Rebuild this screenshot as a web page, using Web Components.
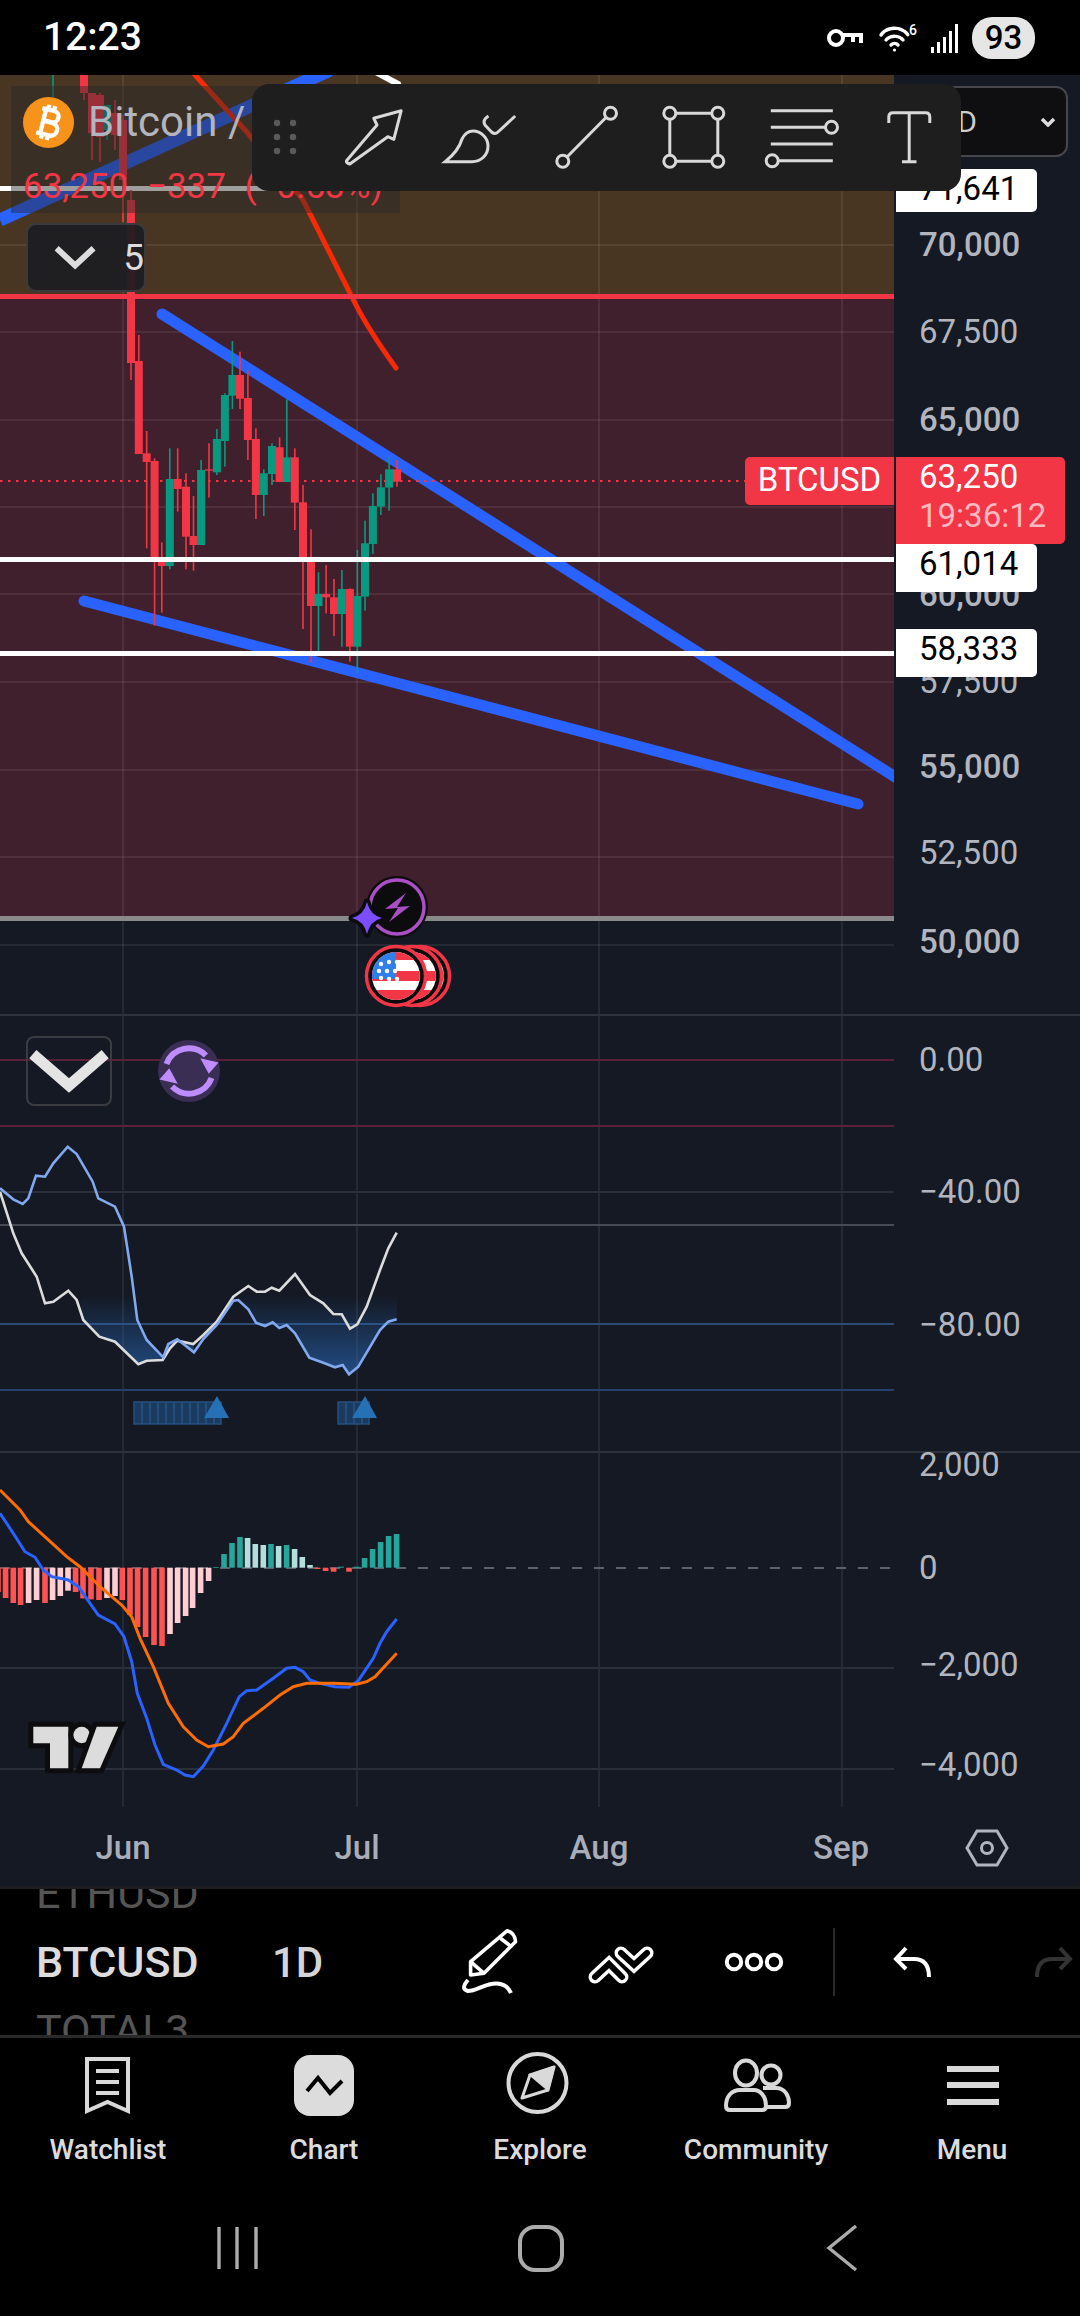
<!DOCTYPE html>
<html>
<head>
<meta charset="utf-8">
<title>BTCUSD</title>
<style>
  html, body { margin: 0; padding: 0; background: #000; }
  body { width: 1080px; height: 2316px; overflow: hidden; font-family: Roboto, "Liberation Sans", sans-serif; }
</style>
</head>
<body>
<tv-app></tv-app>
<script>
const RED = '#f23645', GREEN = '#089981', AXIS = '#b2b5be', BG = '#141924';

function tick(y, text, weight) {
  return `<span class="tick" style="top:${y}px;font-weight:${weight || 400}">${text}</span>`;
}
function grid(top, bottom) {
  return [123, 357, 599, 842].map(x => `<line x1="${x}" x2="${x}" y1="${top}" y2="${bottom}" stroke="#fff" stroke-opacity=".07" stroke-width="2"/>`).join('');
}
function hline(y, color, w) {
  return `<line x1="0" x2="894" y1="${y}" y2="${y}" stroke="${color}" stroke-width="${w || 2}"/>`;
}
function poly(points, ox, oy) {
  return points.map(p => (p[0] / 3 + (ox || 0)).toFixed(1) + ',' + (p[1] / 3 + oy).toFixed(1)).join(' ');
}

const paneStyle = `
  :host { display: flex; box-sizing: border-box; width: 1080px; background: ${BG}; }
  .plot { position: relative; width: 894px; height: 100%; flex: none; overflow: hidden; }
  .plot svg { display: block; width: 894px; height: 100%; }
  .axis { position: relative; flex: 1; height: 100%; }
  .tick { position: absolute; left: 25px; font-size: 33px; line-height: 40px; margin-top: -20px; color: ${AXIS}; white-space: nowrap; }
`;

// status bar
const statusTpl = document.createElement('template');
statusTpl.innerHTML = `
  <style>
    :host { display: flex; align-items: center; height: 75px; padding: 0 45px 0 43px; box-sizing: border-box; background: #000; color: #fff; }
    .time { font-size: 39px; font-weight: 500; flex: 1; padding-bottom: 2px; }
    .icons { display: flex; align-items: center; }
    svg { display: block; }
    .batt { width: 63px; height: 42px; border-radius: 20px; margin-left: 13px; background: #e6e6e6; color: #000; font-size: 33px; font-weight: 500; line-height: 42px; text-align: center; }
  </style>
  <div class="time">12:23</div>
  <div class="icons">
    <svg width="37" height="20" viewBox="0 0 37 20" fill="none" stroke="#fff" stroke-width="4" style="margin-right:15px">
      <circle cx="10" cy="10" r="7"/><path d="M17 7H35V15M27 7V14"/>
    </svg>
    <svg width="40" height="30" viewBox="0 0 40 30" fill="none" stroke="#fff" stroke-width="3.4" stroke-linecap="round" style="margin-right:13px">
      <path d="M3 12C9 3 24 3 30 12" stroke-dasharray="5 1.5"/><path d="M8 17C12 12 21 12 25 17" stroke-dasharray="4 1.5"/><path d="M13 22C15 20 18 20 20 22"/>
      <circle cx="16.5" cy="27" r="1.6" fill="#fff" stroke="none"/>
      <text x="31" y="12" font-family="Roboto" font-size="14" font-weight="500" fill="#fff" stroke="none">6</text>
    </svg>
    <svg width="28" height="30" viewBox="0 0 28 30" fill="#fff">
      <rect x="0" y="24" width="3" height="6"/><rect x="6" y="19" width="3" height="11"/><rect x="12" y="14" width="3" height="16"/><rect x="18" y="8" width="3" height="22"/><rect x="24" y="1" width="3" height="29"/>
    </svg>
    <div class="batt">93</div>
  </div>`;
class StatusBar extends HTMLElement {
  constructor() {
    super();
    this.attachShadow({ mode: 'open' }).appendChild(statusTpl.content.cloneNode(true));
  }
}
customElements.define('status-bar', StatusBar);

// main candle pane
function candles() {
  const early = [
    [53, 60, 60, 60, 97, 'G'], [84, 60, 60, 93, 100, 'R'], [92, 93, 93, 133, 160, 'R'], [100, 93, 95, 137, 162, 'R'],
    [107, 105, 105, 130, 140, 'G'], [115, 100, 113, 135, 150, 'R'], [123, 115, 120, 180, 222, 'R'], [131, 190, 200, 363, 380, 'R']
  ];
  // x, wick top, body top, body bottom, wick bottom, read from the 2.904x / 3x crop
  const rest = [
    [403,165,243,522,522,'R'],[426,453,520,546,805,'R'],[449,535,543,836,1037,'R'],[470,787,838,858,998,'R'],
    [493,505,597,858,868,'G'],[516,505,597,627,695,'R'],[540,580,620,770,868,'R'],[562,648,768,795,872,'R'],
    [584,540,570,795,795,'G'],[607,490,568,572,653,'R'],[630,447,477,577,585,'G'],[653,340,345,483,560,'G'],
    [675,183,285,347,387,'G'],[697,215,285,356,387,'R'],[720,272,354,480,540,'R'],[743,445,477,645,717,'R'],
    [766,568,580,645,708,'G'],[790,490,498,582,615,'G'],[812,472,502,606,606,'R'],[833,358,532,606,606,'G'],
    [856,505,532,668,750,'R'],[880,615,667,842,1047,'R'],[903,748,842,978,1148,'R'],[925,877,942,978,1128,'G'],
    [947,855,942,952,1000,'R'],[970,897,952,1002,1068,'R'],[993,870,927,1002,1100,'G'],[1016,925,927,1100,1145,'R'],
    [1038,810,948,1100,1180,'G'],[1060,722,790,950,992,'G'],[1083,640,678,792,822,'G'],[1106,583,622,680,705,'G'],
    [1130,530,568,623,692,'G'],[1153,540,568,605,620,'R']
  ].map(c => [c[0] / 2.904, 280 + c[1] / 3, 280 + c[2] / 3, 280 + c[3] / 3, 280 + c[4] / 3, c[5]]);
  return early.concat(rest).map(c => {
    const col = c[5] === 'G' ? GREEN : RED;
    return `<rect x="${(c[0] - .8).toFixed(1)}" y="${c[1].toFixed(1)}" width="1.6" height="${(c[4] - c[1]).toFixed(1)}" fill="${col}"/>` +
      `<rect x="${(c[0] - 4).toFixed(1)}" y="${c[2].toFixed(1)}" width="8" height="${(c[3] - c[2]).toFixed(1)}" fill="${col}"/>`;
  }).join('');
}

function flagCoin(cx, i) {
  const cy = 976;
  let stars = '';
  [[-15, -11], [-7, -13], [1, -13], [-17, -4], [-9, -4], [-1, -4], [-15, 3], [-7, 4], [1, 4]].forEach(s => {
    stars += `<circle cx="${cx + s[0]}" cy="${cy + s[1] - 1}" r="2.2" fill="#fff"/>`;
  });
  return `<clipPath id="flag${i}"><circle cx="${cx}" cy="${cy}" r="24"/></clipPath>
    <circle cx="${cx}" cy="${cy}" r="29.5" fill="#0b0b0e" stroke="${RED}" stroke-width="3.5"/>
    <g clip-path="url(#flag${i})">
      <rect x="${cx - 25}" y="${cy - 25}" width="50" height="50" fill="#fff"/>
      <rect x="${cx - 25}" y="${cy - 25}" width="50" height="9" fill="${RED}"/>
      <rect x="${cx - 25}" y="${cy - 5}" width="50" height="10" fill="${RED}"/>
      <rect x="${cx - 25}" y="${cy + 14}" width="50" height="11" fill="${RED}"/>
      <rect x="${cx - 25}" y="${cy - 25}" width="25" height="28" fill="#2f80ed"/>
      ${stars}
    </g>`;
}

const priceTpl = document.createElement('template');
priceTpl.innerHTML = `
  <style>${paneStyle}
    .legend { position: absolute; left: 11px; top: 11px; width: 389px; height: 127px; background: rgba(43,41,43,.45); }
    .coin { position: absolute; left: 12px; top: 11px; }
    .name { position: absolute; left: 77px; top: 11px; font-size: 42px; line-height: 50px; color: ${AXIS}; white-space: nowrap; }
    .quote { position: absolute; left: 12px; top: 80px; font-size: 35px; line-height: 42px; color: ${RED}; white-space: nowrap; word-spacing: 10px; }
    .fold { position: absolute; left: 26px; top: 148px; width: 120px; height: 69px; box-sizing: border-box; display: flex; align-items: center; gap: 27px; padding-left: 26px;
      background: rgba(28,28,34,.92); border: 2px solid #3a3a3e; border-radius: 10px; color: #ddd; font-size: 37px; }
    .tag { position: absolute; left: 2px; box-sizing: border-box; height: 48px; padding-left: 23px; background: #fff; color: #000; font-size: 33px; line-height: 40px; border-radius: 0 5px 5px 0; width: 141px; }
    .now { position: absolute; left: 2px; top: 382px; width: 169px; height: 87px; box-sizing: border-box; padding: 0 0 0 23px; background: ${RED}; color: #fff; font-size: 33px; line-height: 39px; border-radius: 0 5px 5px 0; }
    .now div + div { color: #ffb9c0; }
    .sym { position: absolute; left: 745px; top: 382px; width: 149px; height: 48px; background: ${RED}; color: #fff; font-size: 33px; line-height: 46px; text-align: center; border-radius: 5px 0 0 5px; }
    .cur { position: absolute; left: 24px; top: 11px; width: 150px; height: 71px; box-sizing: border-box; display: flex; align-items: center; justify-content: flex-end; gap: 63px; padding-right: 10px;
      background: #0f0f11; border: 2px solid #47474b; border-radius: 12px; color: #ccc; font-size: 30px; }
  </style>
  <div class="plot">
    <svg viewBox="0 75 894 939" preserveAspectRatio="none">
      <rect x="0" y="75" width="894" height="220" fill="#483622"/>
      <rect x="0" y="295" width="894" height="622" fill="#41202d"/>
      ${[245, 332, 420, 507, 594, 682, 770, 857, 945].map(y => hline(y, 'rgba(255,255,255,.07)')).join('')}
      ${grid(75, 1014)}
      <line x1="0" y1="220" x2="330" y2="70" stroke="#2962ff" stroke-width="13"/>
      <line x1="372" y1="70" x2="398" y2="84" stroke="#fff" stroke-width="6" stroke-linecap="round"/>
      <path d="M195 75L245 130 303 200 351 295Q365 325 396 368" fill="none" stroke="#f72a08" stroke-width="5" stroke-linecap="round"/>
      ${hline(188.5, '#fff', 5)}
      <line x1="162" y1="314" x2="900" y2="780" stroke="#2962ff" stroke-width="11" stroke-linecap="round"/>
      <line x1="84" y1="601" x2="858" y2="804" stroke="#2962ff" stroke-width="11" stroke-linecap="round"/>
      ${hline(481, RED).replace('x2="894"', 'x2="745" stroke-dasharray="2.5 5.5"')}
      ${candles()}
      ${hline(296.5, RED, 5)}
      ${hline(559.5, '#fff', 5)}
      ${hline(653.5, '#fff', 5)}
      ${hline(918.5, '#8a8a8a', 5)}
      <circle cx="397" cy="907" r="31" fill="#0c0c0f"/>
      <circle cx="397" cy="907" r="27" fill="none" stroke="#ab4fc6" stroke-width="3.5"/>
      <path d="M9 -14L-12 2 1 1 -8 15 13 -1 0 0Z" transform="translate(397 907)" fill="#ab4fc6"/>
      <path d="M367 902Q370 915 382 918 370 921 367 934 364 921 352 918 364 915 367 902Z" fill="#7c4dff" stroke="#0c0c0f" stroke-width="7" paint-order="stroke" stroke-linejoin="round"/>
      ${flagCoin(420, 1)}${flagCoin(412, 2)}${flagCoin(396, 3)}
    </svg>
    <div class="legend">
      <svg class="coin" style="width:51px;height:51px" viewBox="0 0 51 51">
        <circle cx="25.5" cy="25.5" r="25.5" fill="#f7931a"/>
        <g transform="rotate(14 25.5 25.5)" fill="none" stroke="#fff" stroke-width="4.4">
          <path d="M16 13H28C36 13 36 24.5 28 24.5H20M20 25H29C38 25 38 38 29 38H16M20 13V38M22 8V13M28 8V13M22 38V43M28 38V43"/>
        </g>
      </svg>
      <div class="name">Bitcoin /</div>
      <div class="quote">63,250 −337 (−0.53%)</div>
    </div>
    <div class="fold">
      <svg width="32" height="20" viewBox="0 0 32 20" fill="none" stroke="#ddd" stroke-width="4.5"><path d="M2 3L16 16 30 3"/></svg>
      <span>5</span>
    </div>
  </div>
  <div class="axis">
    ${tick(170, '70,000', 500)}${tick(257, '67,500')}${tick(345, '65,000', 500)}${tick(520, '60,000', 500)}${tick(607, '57,500')}
    ${tick(692, '55,000', 500)}${tick(778, '52,500')}${tick(867, '50,000', 500)}
    <div class="cur"><span>USD</span><svg width="16" height="10" viewBox="0 0 16 10" fill="none" stroke="#ddd" stroke-width="3.5"><path d="M2 2L8 8 14 2"/></svg></div>
    <div class="tag" style="top:94px;height:43px">71,641</div>
    <div class="now"><div>63,250</div><div>19:36:12</div></div>
    <div class="tag" style="top:469px">61,014</div>
    <div class="tag" style="top:554px">58,333</div>
  </div>
  <div class="sym">BTCUSD</div>`;
class PricePane extends HTMLElement {
  constructor() {
    super();
    this.attachShadow({ mode: 'open' }).appendChild(priceTpl.content.cloneNode(true));
  }
}
customElements.define('price-pane', PricePane);

// oscillator pane
const oscBlue = [[0,505],[40,538],[68,552],[85,535],[108,467],[135,470],[160,430],[203,380],[230,402],[278,485],[295,535],[345,560],[372,620],[395,770],[412,900],[440,960],[490,1012],[505,972],[532,958],[582,997],[610,957],[650,915],[700,842],[715,840],[745,868],[768,908],[795,918],[818,907],[838,924],[860,915],[885,940],[928,1013],[970,1028],[1005,1042],[1028,1035],[1047,1063],[1075,1040],[1140,930],[1165,905],[1190,898]];
const oscWhite = [[0,515],[40,640],[65,700],[110,770],[135,850],[160,845],[205,812],[230,840],[250,900],[298,950],[345,965],[415,1033],[440,1022],[488,1020],[510,985],[532,962],[580,972],[610,945],[650,905],[700,830],[745,798],[770,815],[795,815],[815,803],[838,812],[885,762],[930,825],[970,850],[1000,882],[1025,883],[1050,926],[1072,913],[1100,860],[1140,750],[1165,685],[1190,638]];
const oscFill1 = [[240,825],[250,900],[298,950],[345,965],[415,1033],[440,1022],[488,1020],[490,1012],[440,960],[412,900],[404,825]];
const oscFill2 = [[715,825],[715,840],[745,868],[768,908],[795,918],[818,907],[838,924],[860,915],[885,940],[928,1013],[970,1028],[1005,1042],[1028,1035],[1047,1063],[1075,1040],[1140,930],[1165,905],[1190,898],[1190,825]];
const oscFill3 = [[490,1012],[505,972],[532,958],[580,972],[582,997],[532,962],[510,985]];

function stripes(x1, x2) {
  let out = `<rect x="${x1}" y="1402" width="${x2 - x1}" height="22" fill="#1a3a5f" stroke="#24507f" stroke-width="1.5"/>`;
  for (let x = x1 + 8; x < x2; x += 8) out += `<line x1="${x}" x2="${x}" y1="1402" y2="1424" stroke="#2a5585" stroke-width="1.5"/>`;
  return out;
}

const oscTpl = document.createElement('template');
oscTpl.innerHTML = `
  <style>${paneStyle}
    :host { height: 437px; border-top: 2px solid #2e323d; }
    .fold { position: absolute; left: 26px; top: 20px; width: 86px; height: 70px; box-sizing: border-box; display: flex; align-items: center; justify-content: center; border: 2px solid #3a3c42; border-radius: 8px; }
    .sync { position: absolute; left: 158px; top: 24px; width: 62px; height: 62px; border-radius: 50%; background: #3a2e55; display: flex; align-items: center; justify-content: center; }
  </style>
  <div class="plot">
    <svg viewBox="0 1016 894 435" preserveAspectRatio="none">
      <defs><linearGradient id="fade" gradientUnits="userSpaceOnUse" x1="0" x2="0" y1="1295" y2="1375">
        <stop offset="0" stop-color="#2a6cc0" stop-opacity="0"/><stop offset="1" stop-color="#2a6cc0" stop-opacity=".62"/>
      </linearGradient></defs>
      ${grid(1016, 1451)}
      ${hline(1060, '#5a2035')}${hline(1126, '#5a2035')}${hline(1192, '#2b2f3a')}${hline(1225, '#474a55')}${hline(1324, '#2b4a75')}${hline(1390, '#26426c')}
      <polygon points="${poly(oscFill1, 0, 1020)}" fill="url(#fade)"/>
      <polygon points="${poly(oscFill2, 0, 1020)}" fill="url(#fade)"/>
      <polygon points="${poly(oscFill3, 0, 1020)}" fill="url(#fade)"/>
      <polyline points="${poly(oscWhite, 0, 1020)}" fill="none" stroke="#dcdcdc" stroke-width="2.6"/>
      <polyline points="${poly(oscBlue, 0, 1020)}" fill="none" stroke="#82a9f0" stroke-width="2.6"/>
      ${stripes(134, 221)}${stripes(338, 369)}
      <path d="M217 1396L229 1418H204Z M365 1396L377 1418H352Z" fill="#2670b5"/>
    </svg>
    <div class="fold"><svg width="34" height="20" viewBox="0 0 34 20" fill="none" stroke="#e4e4e4" stroke-width="4.5"><path d="M2 3L17 16 32 3"/></svg></div>
    <div class="sync">
      <svg width="44" height="44" viewBox="-22 -22 44 44" fill="none" stroke="#bf8cff" stroke-width="4.2">
        <path d="M-16 -5A17 17 0 0 1 12 -11"/><path d="M16 5A17 17 0 0 1 -12 11"/>
        <path d="M8 -9L21 -6 14 2Z M-8 9L-21 6 -14 -2Z" fill="#bf8cff" stroke="none"/>
      </svg>
    </div>
  </div>
  <div class="axis">${tick(44, '0.00')}${tick(176, '−40.00')}${tick(309, '−80.00')}</div>`;
class OscPane extends HTMLElement {
  constructor() {
    super();
    this.attachShadow({ mode: 'open' }).appendChild(oscTpl.content.cloneNode(true));
  }
}
customElements.define('osc-pane', OscPane);

// macd pane
const macdBlue = [[0,130],[40,190],[75,245],[105,262],[130,300],[155,320],[205,330],[235,350],[295,435],[345,462],[372,500],[395,575],[412,670],[440,745],[465,825],[490,883],[530,900],[555,915],[580,920],[610,888],[640,840],[680,760],[718,680],[740,662],[770,660],[820,625],[860,595],[885,592],[910,605],[930,630],[960,640],[1005,650],[1047,652],[1075,632],[1120,565],[1140,520],[1160,485],[1190,447]];
const macdOrange = [[0,60],[60,120],[85,155],[140,205],[200,260],[240,290],[300,350],[365,405],[395,440],[420,505],[460,590],[505,700],[550,770],[590,810],[625,830],[670,822],[700,800],[730,760],[790,715],[840,675],[880,650],[920,640],[1000,640],[1070,643],[1100,635],[1125,620],[1190,550]];
// zoom-x, top of bar or bottom of bar, colour: g dark green, h light green, r dark red, p light red
const bars = [[1190,192,'g'],[1166,198,'g'],[1142,216,'g'],[1118,237,'g'],[1094,264,'g'],[1070,290,'g'],[1047,305,'r'],[1023,290,'g'],[1001,305,'r'],[977,303,'r'],[953,297,'r'],
  [930,285,'h'],[907,261,'h'],[884,237,'h'],[860,225,'g'],[836,228,'h'],[813,222,'g'],[790,225,'h'],[766,222,'h'],[743,204,'h'],[720,201,'g'],[696,219,'g'],[672,252,'g'],[648,291,'g'],
  [626,333,'p'],[602,369,'p'],[578,414,'p'],[557,438,'p'],[533,459,'p'],[510,492,'p'],[486,528,'r'],[462,525,'r'],[437,501,'r'],[413,471,'r'],[390,435,'r'],[367,390,'r'],[345,378,'p'],[321,384,'p'],
  [297,390,'r'],[273,388,'r'],[249,385,'r'],[227,366,'r'],[204,362,'p'],[181,378,'p'],[158,390,'p'],[135,399,'r'],[110,390,'p'],[86,399,'p'],[62,405,'r'],[40,399,'r'],[17,384,'r'],[-6,366,'r']];
const barColor = { g: '#26a69a', h: '#b2dfdb', r: '#ff5252', p: '#ffcdd2' };
function histogram() {
  return bars.map(b => {
    const y1 = Math.min(b[1], 293), y2 = Math.max(b[1], 293);
    return `<rect x="${((b[0] - 8.5) / 3).toFixed(1)}" y="${(1470 + y1 / 3).toFixed(1)}" width="5.6" height="${((y2 - y1) / 3).toFixed(1)}" fill="${barColor[b[2]]}"/>`;
  }).join('');
}

const macdTpl = document.createElement('template');
macdTpl.innerHTML = `
  <style>${paneStyle}
    :host { height: 356px; border-top: 2px solid #2e323d; }
  </style>
  <div class="plot">
    <svg viewBox="0 1453 894 354" preserveAspectRatio="none">
      ${grid(1453, 1807)}
      ${hline(1668, '#2b2f3a')}${hline(1769, '#2b2f3a')}
      <line x1="0" x2="894" y1="1568" y2="1568" stroke="#5d606b" stroke-width="2" stroke-dasharray="10 12"/>
      ${histogram()}
      <polyline points="${poly(macdBlue, 0, 1470)}" fill="none" stroke="#2962ff" stroke-width="3"/>
      <polyline points="${poly(macdOrange, 0, 1470)}" fill="none" stroke="#ff6d00" stroke-width="3"/>
      <g fill="#dcdcdc" stroke="#0d0d0f" stroke-width="10" paint-order="stroke">
        <path d="M33.3 1726.7H68.3V1768.3H50V1743.3H33.3Z"/>
        <circle cx="81.7" cy="1735" r="8.3"/>
        <path d="M96.7 1726.7H118.3L100 1768.3H81.7Z"/>
      </g>
    </svg>
  </div>
  <div class="axis">${tick(12, '2,000')}${tick(115, '0')}${tick(212, '−2,000')}${tick(312, '−4,000')}</div>`;
class MacdPane extends HTMLElement {
  constructor() {
    super();
    this.attachShadow({ mode: 'open' }).appendChild(macdTpl.content.cloneNode(true));
  }
}
customElements.define('macd-pane', MacdPane);

// time axis
const timeTpl = document.createElement('template');
timeTpl.innerHTML = `
  <style>
    :host { display: block; position: relative; height: 82px; box-sizing: border-box; background: ${BG}; border-bottom: 3px solid #1c1c1c; }
    span { position: absolute; top: 21px; transform: translateX(-50%); font-size: 33px; font-weight: 500; line-height: 40px; color: #a9adb9; }
    svg { position: absolute; left: 964px; top: 20px; }
  </style>
  <span style="left:123px">Jun</span><span style="left:357px">Jul</span><span style="left:599px">Aug</span><span style="left:841px">Sep</span>
  <svg width="46" height="42" viewBox="0 0 46 42" fill="none" stroke="${AXIS}" stroke-width="3"><path d="M3 21L13 4H33L43 21 33 38H13Z"/><circle cx="23" cy="21" r="5.5"/></svg>`;
class TimeAxis extends HTMLElement {
  constructor() {
    super();
    this.attachShadow({ mode: 'open' }).appendChild(timeTpl.content.cloneNode(true));
  }
}
customElements.define('time-axis', TimeAxis);

// floating drawing toolbar
const toolsTpl = document.createElement('template');
toolsTpl.innerHTML = `
  <style>
    :host { position: absolute; left: 252px; top: 9px; width: 709px; height: 107px; display: flex; background: #1e1e1e; border-radius: 17px; }
    .grip { width: 67.5px; flex: none; }
    svg { display: block; flex: none; fill: none; stroke: #d9d9d9; stroke-width: 3; }
  </style>
  <div class="grip">
    <svg width="67" height="107" viewBox="0 0 67 107" style="fill:#5a5a5a;stroke:none">
      <circle cx="25" cy="39" r="3.2"/><circle cx="41" cy="39" r="3.2"/><circle cx="25" cy="53" r="3.2"/><circle cx="41" cy="53" r="3.2"/><circle cx="25" cy="67" r="3.2"/><circle cx="41" cy="67" r="3.2"/>
    </svg>
  </div>
  <svg width="107" height="107" viewBox="0 0 107 107"><path d="M29.8 80L67.8 52.7 73.8 55.3 81.2 26.7 53.8 34.3 57 41 26.5 76.7Q26 79 29.8 80Z" stroke-linejoin="round"/></svg>
  <svg width="107" height="107" viewBox="0 0 107 107"><path d="M18.2 77.7C29 69 33 62 35 55 38 49 42 47 46 47 54 47 61 54 61 62 61 71 54 77.7 45 77.7Z"/><path d="M61.5 32Q55 36 58 41L64.5 48Q68 51 71 48L88.2 32"/></svg>
  <svg width="107" height="107" viewBox="0 0 107 107"><circle cx="28.8" cy="77.3" r="6"/><circle cx="76.5" cy="29.3" r="6"/><path d="M33 73L72 33.5"/></svg>
  <svg width="107" height="107" viewBox="0 0 107 107"><circle cx="28.8" cy="29.3" r="6"/><circle cx="76.8" cy="29.3" r="6"/><circle cx="28.8" cy="77.3" r="6"/><circle cx="76.8" cy="77.3" r="6"/><path d="M34.8 29.3H70.8M34.8 77.3H70.8M28.8 35.3V71.3M76.8 35.3V71.3"/></svg>
  <svg width="107" height="107" viewBox="0 0 107 107"><path d="M22.8 26.7H84.8M22.8 43.3H77.5M22.8 60H84.8M30.2 76.7H84.8"/><circle cx="83.5" cy="43.3" r="6"/><circle cx="24.2" cy="76.7" r="6"/></svg>
  <svg width="107" height="107" viewBox="0 0 107 107"><path d="M33.8 39V33Q33.8 28.7 38 28.7H70.6Q74.8 28.7 74.8 33V39M54.2 28.7V77.7M47 77.7H61.5"/></svg>`;
class DrawTools extends HTMLElement {
  constructor() {
    super();
    this.attachShadow({ mode: 'open' }).appendChild(toolsTpl.content.cloneNode(true));
  }
}
customElements.define('draw-tools', DrawTools);

// symbol wheel and quick actions
const actionsTpl = document.createElement('template');
actionsTpl.innerHTML = `
  <style>
    :host { display: flex; align-items: center; height: 146px; background: #000; overflow: hidden; flex: none; }
    .wheel { width: 236px; height: 146px; padding-left: 36px; display: flex; flex-direction: column; justify-content: center; flex: none; overflow: hidden; }
    .wheel div { flex: none; height: 68.5px; line-height: 68.5px; font-size: 43px; color: #555; }
    .wheel .on { color: #dcdcdc; font-weight: 500; }
    .res { width: 168px; flex: none; font-size: 42px; color: #d4d4d4; font-weight: 500; }
    svg { display: block; flex: none; fill: none; stroke: #fff; }
    .rule { width: 2px; height: 68px; background: #2a2a2a; flex: none; }
  </style>
  <div class="wheel"><div>ETHUSD</div><div class="on">BTCUSD</div><div>TOTAL3</div></div>
  <div class="res" style="margin-left:0">1D</div>
  <svg width="70" height="75" viewBox="0 0 70 75" stroke-width="3.6" stroke-linejoin="round" style="margin-left:15px">
    <path d="M15.6 36.7V50L29 48.3 60.5 16.7Q60 8 52.3 5.7Z"/><path d="M15.6 36.7L29 48.3M45.4 13.3L56.4 21.7"/>
    <path d="M13 55Q5 64 13 66C22 66 30 58 42 58.5Q52 59 56 68" stroke-width="4"/>
  </svg>
  <svg width="80" height="50" viewBox="0 0 80 50" stroke-linecap="round" style="margin-left:54px">
    <path d="M16 40L30 27 43 40" stroke-width="13"/><path d="M16 40L30 27 43 40" stroke-width="6" stroke="#000"/>
    <path d="M42 16L55 28 68 16" stroke-width="13"/><path d="M42 16L55 28 68 16" stroke-width="6" stroke="#000"/>
  </svg>
  <svg width="60" height="22" viewBox="0 0 60 22" stroke-width="4" style="margin-left:65px"><circle cx="10" cy="11" r="7.2"/><circle cx="30" cy="11" r="7.2"/><circle cx="50" cy="11" r="7.2"/></svg>
  <div class="rule" style="margin-left:49px"></div>
  <svg width="40" height="32" viewBox="0 0 40 32" stroke-width="4" style="margin-left:58px"><path d="M13 2L3 13 13 23M3 13H21Q36 13 36 31"/></svg>
  <svg width="40" height="32" viewBox="0 0 40 32" stroke-width="4" style="margin-left:100px;stroke:#333;margin-right:-40px"><path d="M27 2L37 13 27 23M37 13H19Q4 13 4 31"/></svg>`;
class QuickActions extends HTMLElement {
  constructor() {
    super();
    this.attachShadow({ mode: 'open' }).appendChild(actionsTpl.content.cloneNode(true));
  }
}
customElements.define('quick-actions', QuickActions);

// bottom tabs
class NavTab extends HTMLElement {
  constructor() {
    super();
    this.attachShadow({ mode: 'open' }).innerHTML = `
      <style>
        :host { display: flex; flex-direction: column; align-items: center; width: 216px; flex: none; }
        ::slotted(svg) { display: block; fill: none; stroke: #d9d9d9; stroke-width: 4; }
        .label { margin-top: 13px; font-size: 28px; font-weight: 500; line-height: 34px; color: #dcdcdc; }
      </style>
      <slot></slot>
      <div class="label">${this.getAttribute('label')}</div>`;
  }
}
customElements.define('nav-tab', NavTab);

const navTpl = document.createElement('template');
navTpl.innerHTML = `
  <style>
    :host { display: flex; box-sizing: border-box; height: 154px; padding-top: 12px; background: #000; border-top: 3px solid #2a2a2a; flex: none; }
  </style>
  <slot></slot>`;
class TabBar extends HTMLElement {
  constructor() {
    super();
    this.attachShadow({ mode: 'open' }).appendChild(navTpl.content.cloneNode(true));
  }
}
customElements.define('tab-bar', TabBar);

// android nav keys
const sysTpl = document.createElement('template');
sysTpl.innerHTML = `
  <style>
    :host { display: flex; justify-content: center; padding-top: 34px; background: #000; }
    svg { display: block; width: 303px; height: 52px; flex: none; fill: none; stroke: #ababab; stroke-width: 3.4; }
  </style>
  <svg viewBox="0 0 303 52"><path d="M133 4V46M151 4V46M170 4V46"/></svg>
  <svg viewBox="0 0 303 52"><rect x="131" y="4" width="42" height="43" rx="15" stroke-width="4"/></svg>
  <svg viewBox="0 0 303 52"><path d="M162 3L135 25 162 47" transform="matrix(1 0 0 1 -3 0)" stroke-width="0"/><path d="M164 3L137 25 164 47" stroke-linejoin="miter"/></svg>`;
class SysNav extends HTMLElement {
  constructor() {
    super();
    this.attachShadow({ mode: 'open' }).appendChild(sysTpl.content.cloneNode(true));
  }
}
customElements.define('sys-nav', SysNav);

// page
const appTpl = document.createElement('template');
appTpl.innerHTML = `
  <style>
    :host { display: flex; flex-direction: column; width: 1080px; height: 2316px; background: #000; font-family: Roboto, "Liberation Sans", sans-serif; }
    .chart { position: relative; flex: none; }
    price-pane { height: 939px; }
  </style>
  <status-bar></status-bar>
  <div class="chart">
    <price-pane></price-pane>
    <osc-pane></osc-pane>
    <macd-pane></macd-pane>
    <time-axis></time-axis>
    <draw-tools></draw-tools>
  </div>
  <quick-actions></quick-actions>
  <tab-bar>
    <nav-tab label="Watchlist">
      <svg width="80" height="70" viewBox="0 0 80 70"><path d="M19 9H60V61L39.5 52 19 61Z"/><path d="M28 21H51M28 32H51M28 43H51"/></svg>
    </nav-tab>
    <nav-tab label="Chart">
      <svg width="80" height="70" viewBox="0 0 80 70"><rect x="10" y="5" width="60" height="61" rx="16" fill="#dcdcdc" stroke="none"/><path d="M23 41L34 28 46 43 58 31" stroke="#000"/></svg>
    </nav-tab>
    <nav-tab label="Explore">
      <svg width="80" height="70" viewBox="0 0 80 70"><circle cx="37.5" cy="33" r="29"/><path d="M54 17L48 40 30 25Z" fill="#d9d9d9" stroke-width="2"/><path d="M54 17L48 40 22 48 30 25Z" stroke-width="3" stroke-linejoin="round"/></svg>
    </nav-tab>
    <nav-tab label="Community">
      <svg width="80" height="70" viewBox="0 0 80 70"><ellipse cx="30" cy="23" rx="11" ry="12.5"/><circle cx="55" cy="25" r="9.5"/><path d="M14 60H46Q50 60 50 56C50 46 44 40 38 40H24C16 40 10 46 10 56Q10 60 14 60Z"/><path d="M47 38H60C69 38 73 46 73 53Q73 57 69 57H50"/></svg>
    </nav-tab>
    <nav-tab label="Menu">
      <svg width="80" height="70" viewBox="0 0 80 70"><path d="M15 19H67M15 35H67M15 52H67" stroke-width="6"/></svg>
    </nav-tab>
  </tab-bar>
  <sys-nav></sys-nav>`;
class TvApp extends HTMLElement {
  constructor() {
    super();
    this.attachShadow({ mode: 'open' }).appendChild(appTpl.content.cloneNode(true));
  }
}
customElements.define('tv-app', TvApp);
</script>
</body>
</html>
